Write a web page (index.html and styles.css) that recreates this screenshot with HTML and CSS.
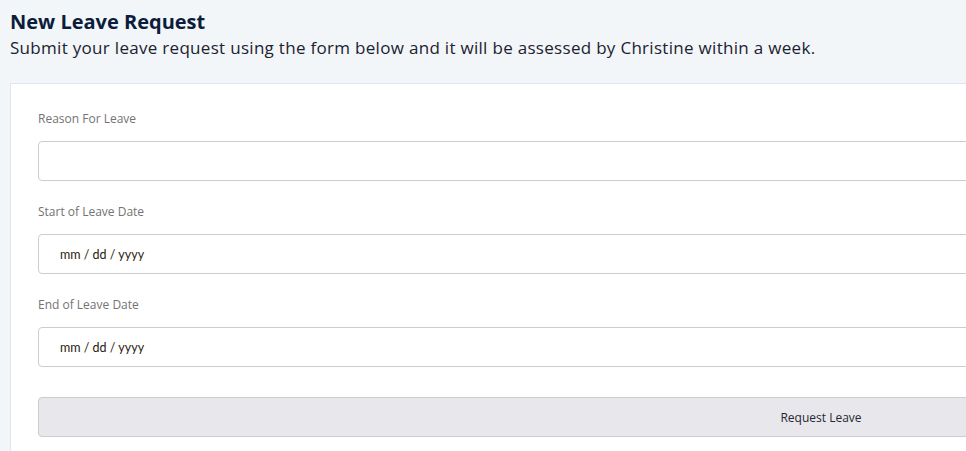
FILE: index.html
```html
<!DOCTYPE html>
<html lang="en">
<head>
<meta charset="utf-8">
<title>New Leave Request</title>
<link rel="stylesheet" href="styles.css">
</head>
<body>
<main class="page">
  <header class="page-head">
    <h1 class="title">New Leave Request</h1>
    <p class="subtitle">Submit your leave request using the form below and it will be assessed by Christine within a week.</p>
  </header>
  <form class="card">
    <div class="field">
      <label class="label" for="reason">Reason For Leave</label>
      <input class="input" id="reason" type="text">
    </div>
    <div class="field">
      <label class="label" for="start">Start of Leave Date</label>
      <input class="input date" id="start" type="text" placeholder="mm / dd / yyyy">
    </div>
    <div class="field">
      <label class="label" for="end">End of Leave Date</label>
      <input class="input date" id="end" type="text" placeholder="mm / dd / yyyy">
    </div>
    <button class="btn" type="button">Request Leave</button>
  </form>
</main>
</body>
</html>
```
FILE: styles.css
```css
html, body {
  margin: 0;
  padding: 0;
  overflow: hidden;
}
body {
  background: #f3f6f9;
  font-family: "Open Sans", "Liberation Sans", sans-serif;
  color: #1b2433;
}
.page {
  padding: 9px 10px 0 10px;
}
.page-head {
  margin-bottom: 22px;
}
.title {
  margin: 0;
  font-size: 20px;
  line-height: 26px;
  font-weight: 700;
  color: #0b1c3c;
}
.subtitle {
  margin: 0;
  font-size: 17px;
  line-height: 26px;
  letter-spacing: 0.3px;
  color: #1b2230;
}
.card {
  width: 1566px;
  background: #ffffff;
  border: 1px solid #e3e4f1;
  padding: 27px 27px 30px 27px;
  display: flex;
  flex-direction: column;
  gap: 23px;
}
.field {
  display: flex;
  flex-direction: column;
  gap: 14px;
}
.label {
  font-size: 12px;
  line-height: 16px;
  color: #737373;
}
.input {
  box-sizing: border-box;
  height: 40px;
  border: 1px solid #cccccc;
  border-radius: 4px;
  padding: 0 21px;
  font-family: "Lato", sans-serif;
  font-size: 12.5px;
  background: #fff;
}
.input::placeholder {
  color: #2a1d10;
  opacity: 1;
}
.btn {
  margin-top: 7px;
  height: 40px;
  box-sizing: border-box;
  border: 1px solid #cccccc;
  border-radius: 4px;
  background: #e8e8ec;
  font-family: "Open Sans", sans-serif;
  font-size: 12px;
  color: #1f2733;
}
```
